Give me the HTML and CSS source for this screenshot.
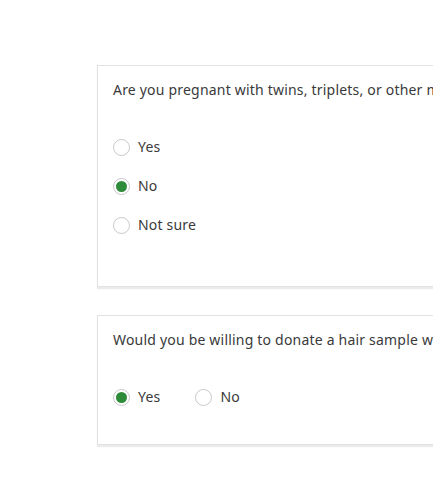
FILE: index.html
```html
<!DOCTYPE html>
<html>
<head>
<meta charset="utf-8">
<link rel="stylesheet" href="styles.css">
</head>
<body>
<div class="page">
  <div class="card card-a">
    <p class="question">Are you pregnant with twins, triplets, or other multiples?</p>
    <div class="options stacked">
      <label class="option"><span class="radio"></span><span class="label">Yes</span></label>
      <label class="option"><span class="radio checked"></span><span class="label">No</span></label>
      <label class="option"><span class="radio"></span><span class="label">Not sure</span></label>
    </div>
  </div>
  <div class="card card-b">
    <p class="question">Would you be willing to donate a hair sample when you visit?</p>
    <div class="options inline">
      <label class="option"><span class="radio checked"></span><span class="label">Yes</span></label>
      <label class="option"><span class="radio"></span><span class="label">No</span></label>
    </div>
  </div>
</div>
</body>
</html>
```

FILE: styles.css
```css
html, body {
  margin: 0;
  padding: 0;
  background: #ffffff;
  overflow: hidden;
}
body {
  font-family: "Noto Sans", "Open Sans", sans-serif;
  font-size: 14px;
  letter-spacing: 0.2px;
  color: #3a3a3a;
  width: 433px;
  height: 498px;
}
.page {
  padding: 65px 0 0 97px;
  display: flex;
  flex-direction: column;
  gap: 28px;
  width: 640px;
}
.card {
  background: #fff;
  border: 1px solid #e2e2e2;
  box-shadow: 0 2px 1px rgba(0,0,0,0.08);
  padding: 14px 15px 0 15px;
  box-sizing: border-box;
}
.card-a { height: 222px; }
.card-b { height: 130px; }
.question {
  margin: 0;
  line-height: 20px;
  white-space: nowrap;
}
.options { display: flex; }
.stacked {
  flex-direction: column;
  gap: 19px;
  margin-top: 37px;
}
.inline {
  flex-direction: row;
  gap: 35px;
  margin-top: 37px;
}
.option {
  display: flex;
  align-items: center;
  gap: 8px;
  line-height: 20px;
  height: 20px;
}
.radio {
  width: 17px;
  height: 17px;
  box-sizing: border-box;
  border: 1px solid #c8c8c8;
  border-radius: 50%;
  background: #fff;
  display: flex;
  align-items: center;
  justify-content: center;
}
.radio.checked::after {
  content: "";
  width: 11px;
  height: 11px;
  border-radius: 50%;
  background: #2e8b3a;
}
```
